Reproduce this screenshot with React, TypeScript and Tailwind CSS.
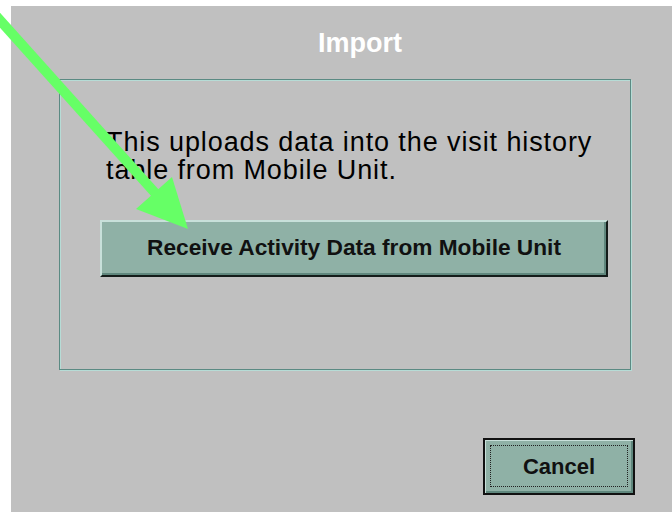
import React from "react";

const font = { fontFamily: '"Liberation Sans", Arial, Helvetica, sans-serif' };

function Pointer() {
  // green annotation arrow laid over the dialog
  return (
    <svg
      className="pointer-events-none absolute left-0 top-0"
      width={672}
      height={513}
      viewBox="0 0 672 513"
    >
      <line x1={-20} y1={-2} x2={156} y2={194} stroke="#66ff66" strokeWidth={10} />
      <polygon points="136,209 172,177 188,229" fill="#66ff66" />
    </svg>
  );
}

export default function App() {
  return (
    <div className="relative h-[513px] w-[672px] overflow-hidden bg-white pl-[11px] pt-[6px]" style={font}>
      <div className="flex h-[506px] flex-col bg-[#c0c0c0]">
        <div className="mt-[24px] pl-[37px] text-center text-[27px] font-bold leading-[27px] text-white">
          Import
        </div>

        <div className="ml-[48px] mt-[22px] h-[291px] w-[572px] border border-[#5b8a83] shadow-[inset_1px_1px_0_#b6dcd6,1px_1px_0_#b6dcd6]">
          <p className="pl-[46px] pt-[48px] text-[27px] leading-[28px] tracking-[0.9px] text-black">
            This uploads data into the visit history
            <br />
            table from Mobile Unit.
          </p>
          <button
            type="button"
            className="ml-[40px] mt-[36px] flex h-[57px] w-[508px] items-center justify-center border-2 border-b-[#141c1a] border-l-[#c8e0da] border-r-[#141c1a] border-t-[#c8e0da] bg-[#8fb1a6] pb-[2px] text-[22.7px] font-bold text-[#111] shadow-[inset_-2px_-2px_0_#5f877d]"
          >
            Receive Activity Data from Mobile Unit
          </button>
        </div>

        <div className="mt-[68px] flex justify-end pr-[37px]">
          <button
            type="button"
            className="flex h-[57px] w-[152px] border-2 border-[#111] bg-[#8fb1a6] shadow-[inset_1px_1px_0_#c8e0da,inset_-2px_-2px_0_#5f877d]"
          >
            <span className="m-[5px] mb-[6px] flex flex-1 items-center justify-center border border-dotted border-[#222] text-[22px] font-bold text-[#111]">
              Cancel
            </span>
          </button>
        </div>
      </div>
      <Pointer />
    </div>
  );
}
